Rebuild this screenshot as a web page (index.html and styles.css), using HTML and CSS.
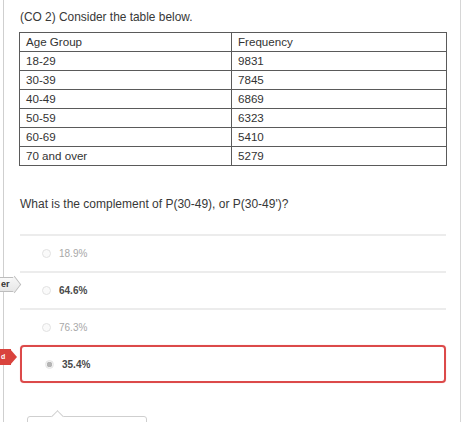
FILE: index.html
```html
<!DOCTYPE html>
<html>
<head>
<meta charset="utf-8">
<link rel="stylesheet" href="styles.css">
</head>
<body>
<div class="page">
  <div class="frame">
    <div class="title">(CO 2) Consider the table below.</div>
    <table class="data">
      <tr><td class="c1">Age Group</td><td>Frequency</td></tr>
      <tr><td class="c1">18-29</td><td>9831</td></tr>
      <tr><td class="c1">30-39</td><td>7845</td></tr>
      <tr><td class="c1">40-49</td><td>6869</td></tr>
      <tr><td class="c1">50-59</td><td>6323</td></tr>
      <tr><td class="c1">60-69</td><td>5410</td></tr>
      <tr><td class="c1">70 and over</td><td>5279</td></tr>
    </table>
    <div class="question">What is the complement of P(30-49), or P(30-49')?</div>
    <div class="options">
      <div class="opt muted"><span class="radio"></span><span class="label">18.9%</span></div>
      <div class="opt strong"><span class="radio"></span><span class="label">64.6%</span></div>
      <div class="opt muted"><span class="radio"></span><span class="label">76.3%</span></div>
      <div class="opt strong picked"><span class="radio checked"></span><span class="label">35.4%</span></div>
    </div>
  </div>
  <div class="tab tab-gray"><span>er</span></div>
  <div class="tab tab-red"><span>d</span></div>
  <div class="popover"></div>
</div>
</body>
</html>
```
FILE: styles.css
```css
html, body {
  margin: 0;
  padding: 0;
  background: #fff;
}
.page {
  position: relative;
  width: 462px;
  height: 422px;
  overflow: hidden;
  font-family: "Liberation Sans", Arial, sans-serif;
  color: #333;
}
.frame {
  box-sizing: border-box;
  margin-left: 3px;
  width: 458px;
  height: 422px;
  border-left: 1px solid #cfcfcf;
  border-right: 1px solid #d6d6d6;
  padding: 10px 14px 0 15px;
}
.title {
  font-size: 11.9px;
  line-height: 14px;
  padding-left: 1px;
  color: #383838;
}
.data {
  margin-top: 8px;
  width: 428px;
  border-collapse: collapse;
  font-size: 11.6px;
  color: #333;
}
.data td {
  border: 1px solid #5a5a5a;
  height: 18px;
  padding: 0 6px;
  line-height: 18px;
  vertical-align: middle;
}
.data td.c1 {
  width: 199px;
}
.question {
  margin-top: 31px;
  font-size: 12px;
  line-height: 14px;
  padding-left: 1px;
  color: #383838;
}
.options {
  margin-top: 23px;
  padding-left: 1px;
}
.opt {
  box-sizing: border-box;
  height: 37px;
  border-top: 2px solid #ececec;
  display: flex;
  align-items: center;
  padding-left: 22px;
  font-size: 10px;
}
.opt .radio {
  width: 7px;
  height: 7px;
  border: 1px solid #e2e2e2;
  border-radius: 50%;
  background: #fafafa;
  margin-right: 8px;
}
.opt.muted {
  color: #a8a8a8;
}
.opt.strong {
  color: #4a4a4a;
  font-weight: bold;
}
.opt.picked {
  height: 38px;
  border: 2px solid #dc4a4a;
  border-radius: 4px;
  padding-left: 23px;
  box-shadow: 0 0 1px #f3b0b0;
}
.radio.checked {
  background: radial-gradient(circle, #b5b5b5 0 2.5px, #f2f2f2 3px);
  border-color: #e6e6e6;
}
.tab {
  position: absolute;
  left: 0;
  height: 15px;
  box-sizing: border-box;
  font-size: 9px;
  font-weight: bold;
  line-height: 15px;
}
.tab span {
  position: relative;
  z-index: 2;
  padding-left: 1px;
}
.tab-gray {
  top: 277px;
  width: 14px;
  background: linear-gradient(#fafafa, #e6e6e6);
  border-top: 1px solid #bdbdbd;
  border-bottom: 1px solid #bdbdbd;
  color: #333;
  line-height: 13px;
}
.tab-gray::after {
  content: "";
  position: absolute;
  left: 9px;
  top: 1px;
  width: 10px;
  height: 10px;
  background: linear-gradient(135deg, #f7f7f7, #e6e6e6);
  border-top: 1px solid #bdbdbd;
  border-right: 1px solid #bdbdbd;
  transform: rotate(45deg) skew(8deg, 8deg);
}
.tab-red {
  top: 349px;
  width: 11px;
  height: 16px;
  background: #d9433d;
  color: #fff;
  font-size: 7px;
  line-height: 16px;
}
.tab-red::after {
  content: "";
  position: absolute;
  left: 10px;
  top: 0;
  width: 0;
  height: 0;
  border-top: 8px solid transparent;
  border-bottom: 8px solid transparent;
  border-left: 7px solid #d9433d;
}
.popover {
  position: absolute;
  left: 27px;
  top: 416px;
  width: 118px;
  height: 20px;
  border: 1px solid #cfcfcf;
  border-radius: 3px;
  background: #fff;
}
.popover::before {
  content: "";
  position: absolute;
  left: 25px;
  top: -5px;
  width: 8px;
  height: 8px;
  background: #fff;
  border-top: 1px solid #cfcfcf;
  border-left: 1px solid #cfcfcf;
  transform: rotate(45deg);
}
```
